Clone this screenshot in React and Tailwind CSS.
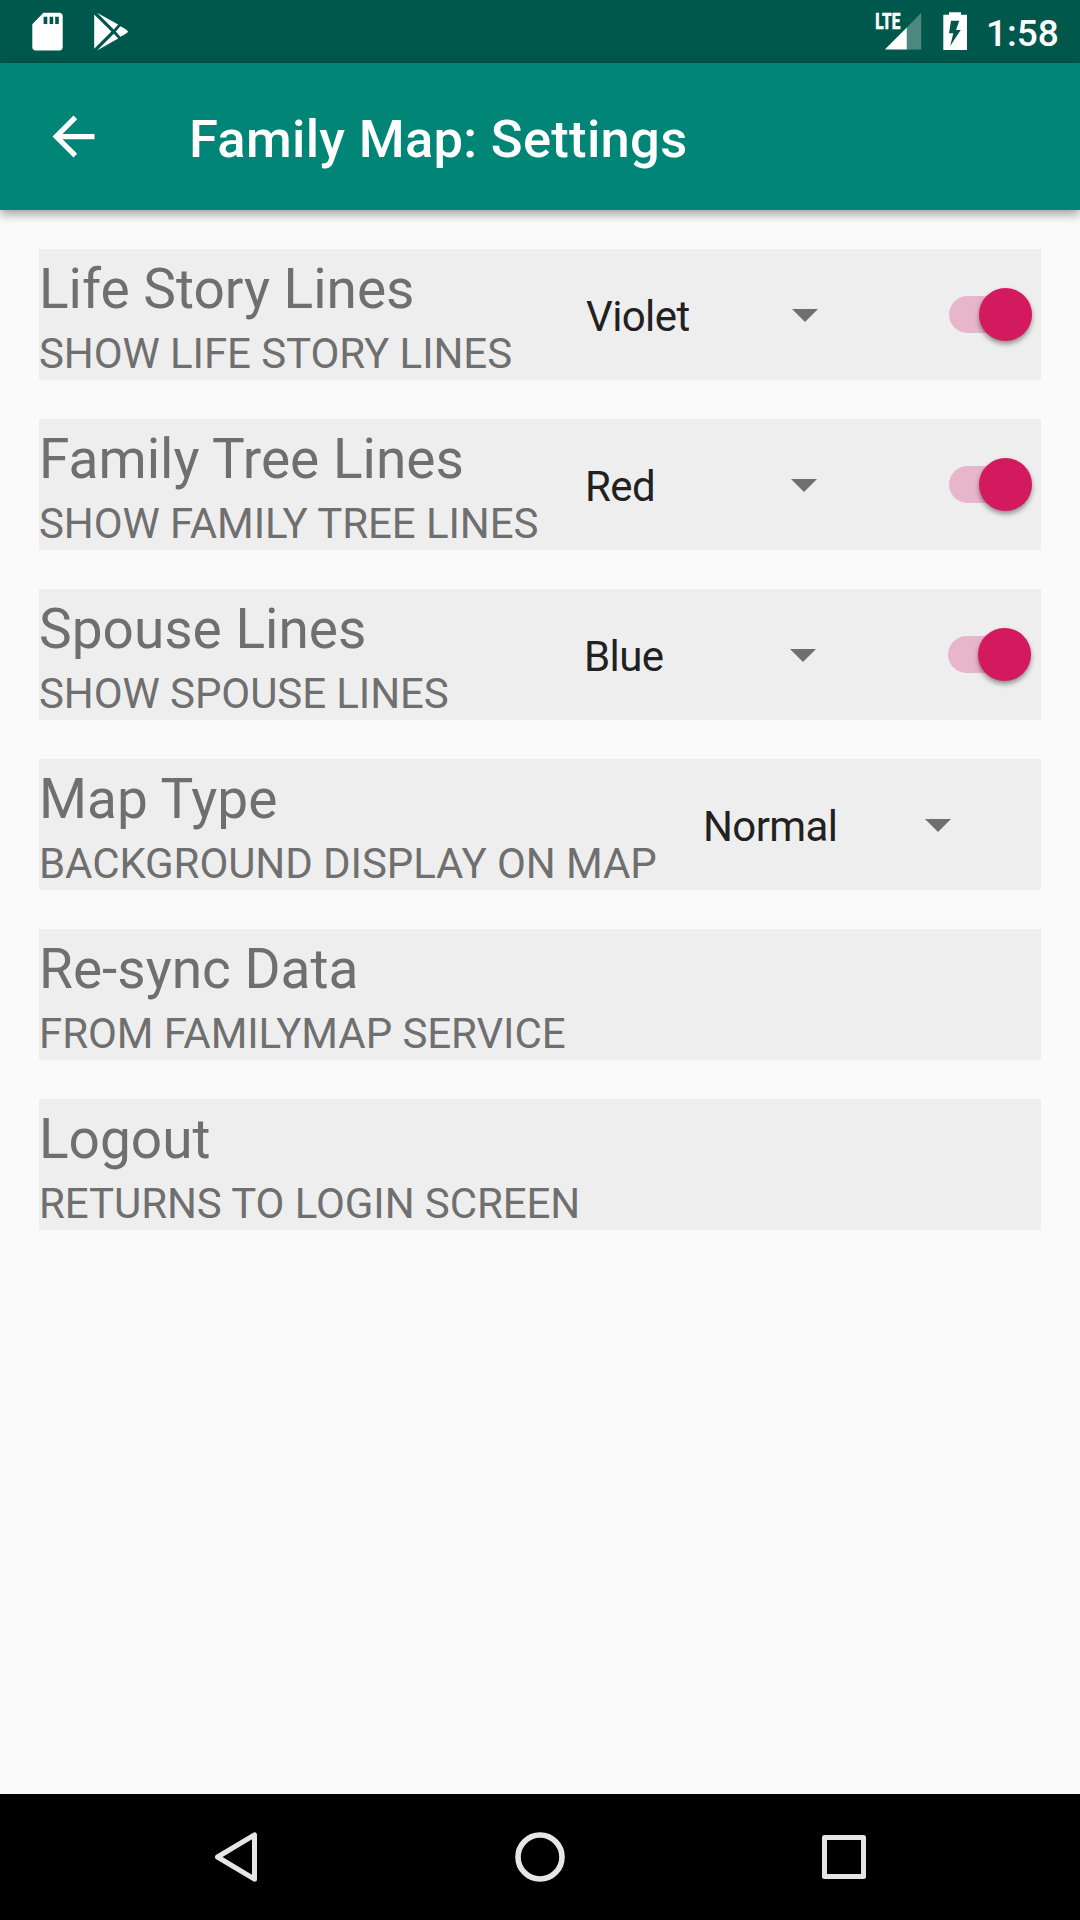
const ROWS = [
  { title: 'Life Story Lines', sub: 'SHOW LIFE STORY LINES', value: 'Violet', label: 'w-[547px]', field: 'w-[205.6px]', toggle: 'mr-[9px]' },
  { title: 'Family Tree Lines', sub: 'SHOW FAMILY TREE LINES', value: 'Red', label: 'w-[546px]', field: 'w-[205.6px]', toggle: 'mr-[9px]' },
  { title: 'Spouse Lines', sub: 'SHOW SPOUSE LINES', value: 'Blue', label: 'w-[545px]', field: 'w-[205.6px]', toggle: 'mr-[10px]' },
  { title: 'Map Type', sub: 'BACKGROUND DISPLAY ON MAP', value: 'Normal', label: 'w-[664px]', field: 'w-[221.6px]' },
  { title: 'Re-sync Data', sub: 'FROM FAMILYMAP SERVICE', label: 'w-full' },
  { title: 'Logout', sub: 'RETURNS TO LOGIN SCREEN', label: 'w-full' },
];

function StatusBar() {
  return (
    <div className="flex h-[63px] items-start justify-between bg-[#00574b] text-white">
      <svg className="h-[63px] w-[140px]" viewBox="0 0 140 63" fill="currentColor">
        <path
          fillRule="evenodd"
          d="M43.4 12.7H59.2Q62.7 12.7 62.7 16.2V47Q62.7 50.4 59.2 50.4H35.8Q32.3 50.4 32.3 47V24.2ZM43.6 16.7V24H47.3V16.7ZM49.6 16.7V24H53.2V16.7ZM55.2 16.7V24H58.8V16.7Z"
        />
        <path d="M94.2 14.6L111.4 31.6L94.2 48.8ZM97 12.8L118.2 24.6L113.8 29.4ZM97 50.4L118.2 38.4L113.8 33.8ZM115.8 31.6L120.4 26.2Q127.9 29.8 127.9 31.6Q127.9 33.2 120.4 36.8Z" />
      </svg>
      <div className="flex">
        <svg className="h-[63px] w-[110px]" viewBox="870 0 110 63" fill="currentColor">
          <text
            x="875.3"
            y="29"
            fontSize="22"
            fontWeight="800"
            stroke="currentColor"
            strokeWidth="0.5"
            textLength="25"
            lengthAdjust="spacingAndGlyphs"
            fontFamily="Roboto, sans-serif"
          >
            LTE
          </text>
          <path d="M884.8 49.5L906.8 27.5V49.5Z" />
          <path d="M906.8 27.5L921.2 12.8V49.5H906.8Z" opacity=".3" />
          <path
            fillRule="evenodd"
            d="M949 12.3H961V14.7H967V50H943.3V14.7H949ZM951 20.7L949 33.3H953.3L950.2 46L960.7 30H956L959.3 20.7Z"
          />
        </svg>
        <div className="w-[100px] pl-[6px] text-[37px] leading-[68px] font-medium">1:58</div>
      </div>
    </div>
  );
}

function AppBar() {
  return (
    <header className="relative flex h-[147px] items-center bg-[#008577] pl-[42px] text-white shadow-[0_4px_10px_rgba(0,0,0,0.38)]">
      <svg className="size-[63px]" viewBox="0 0 24 24" fill="currentColor">
        <path d="M20 11H7.83l5.59-5.59L12 4l-8 8 8 8 1.41-1.41L7.83 13H20z" />
      </svg>
      <h1 className="pt-[4px] pl-[84px] text-[52.5px] leading-[60px] font-medium tracking-[0.3px]">
        Family Map: Settings
      </h1>
    </header>
  );
}

function Switch({ margin }) {
  return (
    <div className={`${margin} mt-[39px] ml-auto flex h-[53px] w-[83px] items-center self-start`}>
      <div className="flex h-[37px] w-full items-center justify-end rounded-full bg-[#e8b6ca]">
        <div className="size-[53px] shrink-0 rounded-full bg-[#d41a5f] shadow-[0_3px_5px_rgba(0,0,0,0.4)]" />
      </div>
    </div>
  );
}

function Row({ row }) {
  return (
    <section className="flex h-[131px] bg-[#eeeeee]">
      <div className={`${row.label} shrink-0 pt-[8px] whitespace-nowrap text-[#6f6f6f]`}>
        <h2 className="text-[55px] leading-[64px]">{row.title}</h2>
        <p className="mt-[8px] text-[42px] leading-[50px] tracking-[-0.08px]">{row.sub}</p>
      </div>
      {row.value && (
        <div className="flex h-[131px] items-start">
          <div className={`${row.field} pt-[43px] text-[42px] leading-[50px] tracking-[-0.6px] text-[#212121]`}>
            {row.value}
          </div>
          <svg className="mt-[60px] h-[13px] w-[26px] text-[#6f6f6f]" viewBox="0 0 26 13" fill="currentColor">
            <path d="M0 0H26L13 13Z" />
          </svg>
        </div>
      )}
      {row.toggle && <Switch margin={row.toggle} />}
    </section>
  );
}

export default function App() {
  return (
    <div className="flex h-[1920px] w-[1080px] flex-col overflow-hidden bg-[#fafafa] font-[Roboto,sans-serif]">
      <StatusBar />
      <AppBar />
      <main className="flex flex-1 flex-col gap-[39px] px-[39px] pt-[39px]">
        {ROWS.map((row) => (
          <Row key={row.title} row={row} />
        ))}
      </main>
      <nav className="flex h-[126px] items-center justify-between bg-black px-[213px] text-[#e6e6e6]">
        <svg className="h-[52px] w-[46px]" viewBox="0 0 46 52" fill="none" stroke="currentColor" strokeWidth="5" strokeLinejoin="round">
          <path d="M41.5 3.8V48.2L4.5 26Z" />
        </svg>
        <svg className="size-[52px]" viewBox="0 0 52 52" fill="none" stroke="currentColor" strokeWidth="5.6">
          <circle cx="26" cy="26" r="22" />
        </svg>
        <svg className="size-[46px]" viewBox="0 0 46 46" fill="none" stroke="currentColor" strokeWidth="5" strokeLinejoin="round">
          <path d="M3.5 3.5H42.5V42.5H3.5Z" />
        </svg>
      </nav>
    </div>
  );
}
